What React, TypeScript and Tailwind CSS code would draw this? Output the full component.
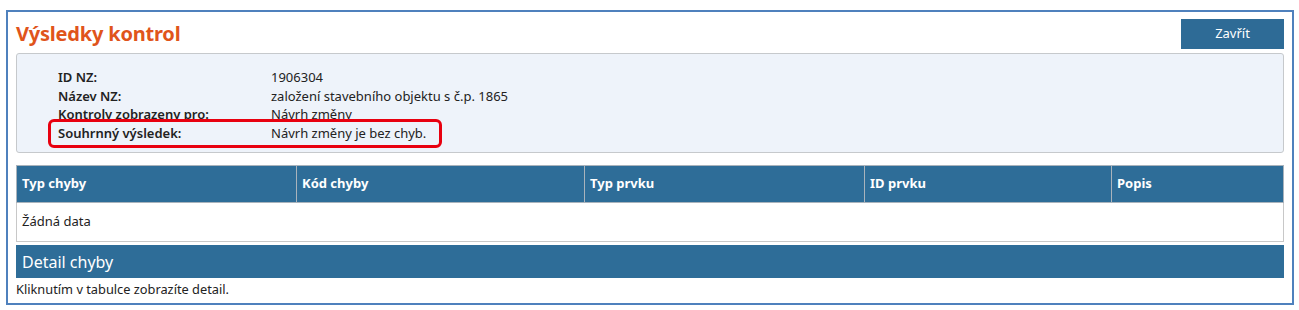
const COLUMNS = [
  { label: 'Typ chyby', w: 'w-[279px]' },
  { label: 'Kód chyby', w: 'w-[288px]' },
  { label: 'Typ prvku', w: 'w-[280px]' },
  { label: 'ID prvku', w: 'w-[247px]' },
  { label: 'Popis', w: 'flex-1' },
];

const INFO = [
  ['ID NZ:', '1906304'],
  ['Název NZ:', 'založení stavebního objektu s č.p. 1865'],
  ['Kontroly zobrazeny pro:', 'Návrh změny'],
  ['Souhrnný výsledek:', 'Návrh změny je bez chyb.'],
];

export default function App() {
  return (
    <div className="w-[1299px] h-[310px] bg-white pt-[10px] pl-[6px] font-['Noto_Sans',sans-serif] text-[#222]">
      <div className="w-[1288px] h-[295px] border-2 border-[#4f81bd] px-[8px] pt-[7px]">
        <div className="flex items-center justify-between h-[30px]">
          <h1 className="text-[20px] font-bold text-[#e0541b] leading-none tracking-[-0.2px]">Výsledky kontrol</h1>
          <button className="w-[103px] h-[30px] bg-[#2e6b96] text-white text-[13px]">Zavřít</button>
        </div>

        <div className="relative mt-[4px] h-[100px] rounded-[3px] border border-[#c6c9cc] bg-[#eef3fa] pt-[14px] pl-[41px]">
          {INFO.map(([label, value]) => (
            <div key={label} className="flex text-[13px] leading-[18.5px]">
              <span className="w-[213px] font-semibold text-[#222]">{label}</span>
              <span>{value}</span>
            </div>
          ))}
          <div className="absolute left-[31px] top-[65px] w-[394px] h-[29px] rounded-[6px] border-[3px] border-[#e8000f]" />
        </div>

        <div className="mt-[12px]">
          <div className="flex h-[38px] bg-[#2e6d98] border border-[#a9b3bc]">
            {COLUMNS.map((c, i) => (
              <div
                key={c.label}
                className={`${c.w} flex items-center px-[5px] text-[13px] font-bold text-white ${i > 0 ? 'border-l border-[#a9b3bc]' : ''}`}
              >
                {c.label}
              </div>
            ))}
          </div>
          <div className="h-[39px] flex items-center px-[5px] border border-t-0 border-[#c8c8c8] text-[13px]">Žádná data</div>
        </div>

        <div className="mt-[3px] h-[33px] bg-[#2e6d98] flex items-center px-[6px] text-white text-[16px]">Detail chyby</div>
        <div className="text-[12.8px] leading-[18px] mt-[2px]">Kliknutím v tabulce zobrazíte detail.</div>
      </div>
    </div>
  );
}
